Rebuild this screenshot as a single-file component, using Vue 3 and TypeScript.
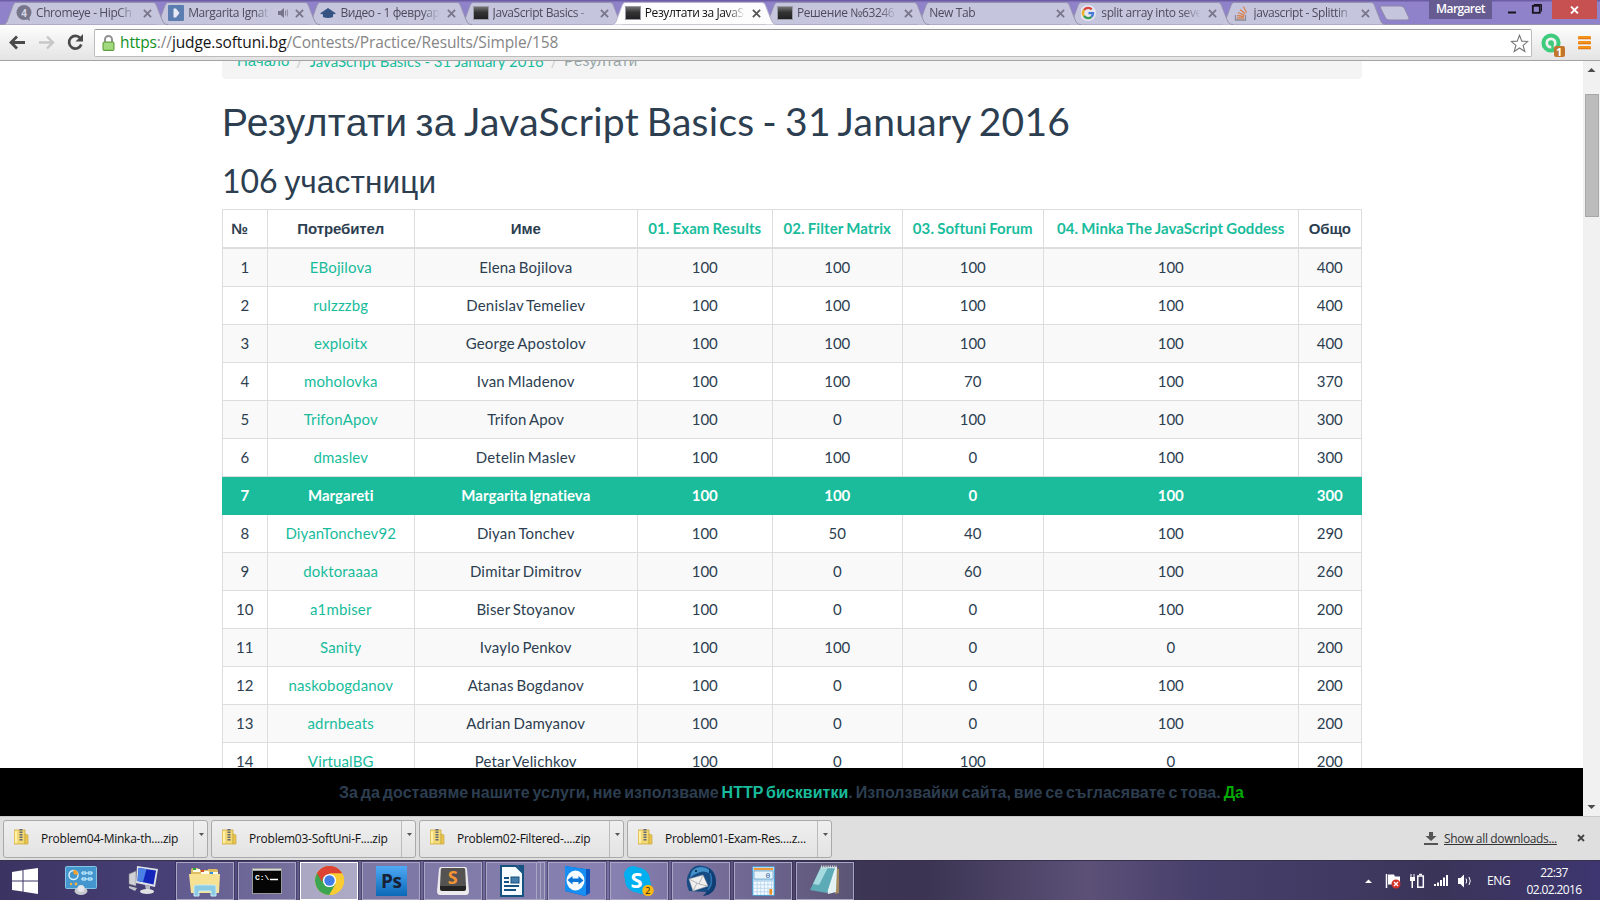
<script setup lang="ts">
type Tab = { title: string; icon: string; active?: boolean; sound?: boolean }
const tabs: Tab[] = [
  { title: 'Chromeye - HipCh', icon: 'hip' },
  { title: 'Margarita Ignat', icon: 'play', sound: true },
  { title: 'Видео - 1 февруар', icon: 'uni' },
  { title: 'JavaScript Basics -', icon: 'box' },
  { title: 'Резултати за JavaS', icon: 'box', active: true },
  { title: 'Решение №63246', icon: 'box' },
  { title: 'New Tab', icon: '' },
  { title: 'split array into seve', icon: 'google' },
  { title: 'javascript - Splittin', icon: 'so' },
]

const widths = [45, 147, 223, 135, 130, 141, 255, 63]
const heads = ['№', 'Потребител', 'Име', '01. Exam Results', '02. Filter Matrix', '03. Softuni Forum', '04. Minka The JavaScript Goddess', 'Общо']
const rows: (string | number)[][] = [
  [1, 'EBojilova', 'Elena Bojilova', 100, 100, 100, 100, 400],
  [2, 'rulzzzbg', 'Denislav Temeliev', 100, 100, 100, 100, 400],
  [3, 'exploitx', 'George Apostolov', 100, 100, 100, 100, 400],
  [4, 'moholovka', 'Ivan Mladenov', 100, 100, 70, 100, 370],
  [5, 'TrifonApov', 'Trifon Apov', 100, 0, 100, 100, 300],
  [6, 'dmaslev', 'Detelin Maslev', 100, 100, 0, 100, 300],
  [7, 'Margareti', 'Margarita Ignatieva', 100, 100, 0, 100, 300],
  [8, 'DiyanTonchev92', 'Diyan Tonchev', 100, 50, 40, 100, 290],
  [9, 'doktoraaaa', 'Dimitar Dimitrov', 100, 0, 60, 100, 260],
  [10, 'a1mbiser', 'Biser Stoyanov', 100, 0, 0, 100, 200],
  [11, 'Sanity', 'Ivaylo Penkov', 100, 100, 0, 0, 200],
  [12, 'naskobogdanov', 'Atanas Bogdanov', 100, 0, 0, 100, 200],
  [13, 'adrnbeats', 'Adrian Damyanov', 100, 0, 0, 100, 200],
  [14, 'VirtualBG', 'Petar Velichkov', 100, 0, 100, 0, 200],
]
const downloads = ['Problem04-Minka-th....zip', 'Problem03-SoftUni-F....zip', 'Problem02-Filtered-....zip', 'Problem01-Exam-Res....z...']
</script>

<template>
  <div class="screen">
    <header class="strip">
      <div class="tabs">
        <div v-for="(t, i) in tabs" :key="i" class="tab" :class="{ active: t.active }" :style="{ zIndex: t.active ? 20 : 10 - i }">
          <svg class="shape" width="168" height="25" viewBox="0 0 168 25">
            <path d="M0 24.5C3 24.5 4 22 5 19L10 5.500C11 3 12 2.500 14 2.500H149C151.500 2.500 152.500 3 153.500 5.500L159 19.500C160.500 23 161.500 24.500 165 24.500Z" :fill="t.active ? '#fdfdfd' : '#c5c6de'" />
            <path d="M0 24.5C3 24.5 4 22 5 19L10 5.500C11 3 12 2.500 14 2.500H149C151.500 2.500 152.500 3 153.500 5.500L159 19.500C160.500 23 161.500 24.500 165 24.500" fill="none" :stroke="t.active ? '#b9b4cc' : '#9692ae'" />
          </svg>
          <span v-if="t.icon" class="fav">
            <svg v-if="t.icon === 'hip'" width="16" height="16"><circle cx="8" cy="7.500" r="7.500" fill="#77758a" /><path d="M9 13l5 3-1-5z" fill="#77758a" /><text x="5.200" y="11.500" font-size="10" font-weight="700" fill="#d6d5e5" font-family="Open Sans">4</text></svg>
            <svg v-else-if="t.icon === 'play'" width="16" height="16"><rect width="16" height="16" rx="1" fill="#5c7db0" /><path d="M5.500 3.500h2.500l3.500 4.500-3.500 4.500H5.500z" fill="#e8ebf5" /></svg>
            <svg v-else-if="t.icon === 'uni'" width="16" height="16"><path d="M8 3l8 5.500-3 1v2.500q-5 2-10 0V9.500L0 8.500z" fill="#365482" /></svg>
            <svg v-else-if="t.icon === 'box'" width="16" height="16"><defs><linearGradient id="bx" x2="0" y2="1"><stop stop-color="#777" /><stop offset=".45" stop-color="#333" /><stop offset="1" stop-color="#202024" /></linearGradient></defs><rect x=".5" y="1.500" width="15" height="13" fill="url(#bx)" stroke="#9a9aa4" /></svg>
            <svg v-else-if="t.icon === 'google'" width="16" height="16"><circle cx="7" cy="8" r="8" fill="#e4e5ef" /><g fill="none" stroke-width="2.300"><path d="M3 5A5 5 0 0 1 10.700 4.400" stroke="#d8453b" /><path d="M3 11A5 5 0 0 1 3 5" stroke="#e8b020" /><path d="M10.500 11.800A5 5 0 0 1 3 11" stroke="#3a9d58" /><path d="M7.500 8.200h4.500q0 2-1.500 3.600" stroke="#4478d8" /></g></svg>
            <svg v-else width="16" height="16" fill="none"><path d="M1.500 10v5h10v-5" stroke="#8d8a93" stroke-width="1.300" /><path d="M3 13h7M3.200 10.500l6.800 1M4 7.500l6.500 2.600M6 4.500l5.300 4.300M9.300 1.500l3.300 6" stroke="#d98350" stroke-width="1.300" /></svg>
          </span>
          <span class="title" :class="{ sounded: t.sound }">{{ t.title }}</span>
          <svg v-if="t.sound" class="sound" width="10" height="10"><path d="M0 3h2.500L6 0v10L2.500 7H0z" fill="#77748a" /><path d="M7.500 2.500v5M9.300 1.500v7" stroke="#8b889d" /></svg>
          <svg class="x" width="9" height="9"><path d="M.9.900l7.200 7.200M8.100.900L.9 8.100" :stroke="t.active ? '#555' : '#777589'" stroke-width="1.800" /></svg>
        </div>
        <svg class="newtab" width="32" height="16"><path d="M2.500 1H22q2.500 0 3.500 2.500L30 13q.5 2-2 2H10q-2.500 0-3.500-2L1.500 3Q1 1 2.500 1z" fill="#c5c6de" stroke="#8b86aa" /></svg>
      </div>
      <span class="profile">Margaret</span>
      <svg class="winctl" width="60" height="19"><path d="M20 12.500h8" stroke="#19151f" stroke-width="2" /><g fill="none" stroke="#19151f"><rect x="44.800" y="5.800" width="7" height="7" stroke-width="1.800" /><path d="M46 4.500h7.500v7" /></g></svg>
      <span class="winclose"><svg width="9" height="8"><path d="M1 .5l7 7M8 .5l-7 7" stroke="#fff" stroke-width="1.800" /></svg></span>
    </header>

    <nav class="toolbar">
      <svg class="arrows" width="84" height="30" fill="none">
        <path d="M11 14.500H25M17 8.500l-6 6 6 6" stroke="#4a4a4a" stroke-width="2.800" />
        <path d="M39 14.500h14M47 8.500l6 6-6 6" stroke="#c7c7c7" stroke-width="2.400" />
        <path d="M80.500 10.500a6.300 6.300 0 1 0 .8 6" stroke="#4a4a4a" stroke-width="2.700" /><path d="M83 6v7.500h-7.500z" fill="#4a4a4a" />
      </svg>
      <div class="omni">
        <svg class="lock" width="13" height="16"><path d="M3 8V4.500a3.500 3.500 0 0 1 7 0V8" fill="none" stroke="#929292" stroke-width="2" /><rect x="1" y="7" width="11" height="8.500" rx="1" fill="#8fce66" stroke="#5d9c41" /><path d="M2 9h9M2 11h9M2 13h9" stroke="#b5e297" /></svg>
        <span class="url"><i class="green">https</i><i>://</i><b>judge.softuni.bg</b><i>/Contests/Practice/Results/Simple/158</i></span>
        <svg class="star" width="19" height="19"><path d="M9.500 1.200l2.300 5.900 6 .3-4.700 4 1.700 6.100-5.300-3.500-5.300 3.500 1.700-6.100-4.700-4 6-.3z" fill="#fff" stroke="#777" stroke-width="1.100" /></svg>
      </div>
      <svg class="ext" width="26" height="26"><circle cx="10" cy="11" r="7.600" fill="none" stroke="#3ecb7b" stroke-width="4" /><circle cx="10" cy="11" r="2.800" fill="#3ecb7b" /><path d="M11.500 11v8" stroke="#3ecb7b" stroke-width="2.500" /><rect x="13" y="14" width="11" height="11" rx="2" fill="#c2762d" /><text x="15" y="23.500" font-size="11" font-weight="700" fill="#fff" font-family="Open Sans">1</text></svg>
      <svg class="menu" width="14" height="14"><g fill="#f49118"><rect width="13" height="3" rx="1" /><rect y="5" width="13" height="3" rx="1" /><rect y="10" width="13" height="3" rx="1" /></g><path d="M0 2.800h13M0 7.800h13M0 12.800h13" stroke="#d8680b" stroke-width=".8" /></svg>
    </nav>

    <main class="viewport">
      <section class="page">
        <div class="doc">
          <div class="crumbs"><a class="cy">Начало</a><em>/</em><a>JavaScript Basics - 31 January 2016</a><em>/</em><span class="cy">Резултати</span></div>
          <h1><span class="cy">Резултати за </span>JavaScript Basics - 31 January 2016</h1>
          <h2>106 <span class="cy">участници</span></h2>
          <table>
            <colgroup><col v-for="(w, i) in widths" :key="i" :style="{ width: w + 'px' }" /></colgroup>
            <thead><tr><th v-for="(h, i) in heads" :key="i" :class="i > 2 && i < 7 ? 'link' : 'cy'">{{ h }}</th></tr></thead>
            <tbody>
              <tr v-for="r in rows" :key="r[0]" :class="{ me: r[0] === 7 }">
                <td v-for="(c, i) in r" :key="i" :class="{ link: i === 1, name: i === 2 }">{{ c }}</td>
              </tr>
            </tbody>
          </table>
        </div>
        <div class="cookie"><span class="cktext">За да доставяме нашите услуги, ние използваме <a>HTTP бисквитки</a>. Използвайки сайта, вие се съгласявате с това. <b>Да</b></span></div>
      </section>
      <aside class="scroll">
        <svg width="17" height="20"><path d="M4.500 11l4-4 4 4z" fill="#4c4c4c" /></svg>
        <div class="thumb"></div>
        <svg class="dn" width="17" height="20"><path d="M4.500 9l4 4 4-4z" fill="#4c4c4c" /></svg>
      </aside>
    </main>

    <section class="shelf">
      <div v-for="d in downloads" :key="d" class="dl">
        <svg class="zip" width="15" height="16"><rect x="0" y="1" width="11" height="14" fill="#f3d873" stroke="#d0ac3c" stroke-width=".8" /><path d="M11 5l3 1v9h-3z" fill="#e8c654" stroke="#c59f31" stroke-width=".6" /><path d="M7 0v12" stroke="#666a78" stroke-width="3" stroke-dasharray="1.500 1" /><path d="M2 2v12" stroke="#fff1ac" stroke-width="2" /></svg>
        <span class="fname">{{ d }}</span>
        <span class="drop"><svg width="5" height="3"><path d="M0 0h5L2.500 3z" fill="#555" /></svg></span>
      </div>
      <svg class="dlicon" width="14" height="14"><path d="M5 0h4v4h3.500L7 9 1.500 4H5zM0 11h14v2H0z" fill="#555" /></svg>
      <span class="all">Show all downloads...</span>
      <svg class="shx" width="8" height="8"><path d="M1 1l6 6M7 1L1 7" stroke="#444" stroke-width="1.800" /></svg>
    </section>

    <footer class="task">
      <span class="plain start"><svg width="26" height="26" fill="#fff"><path d="M0 4l10.500-1.700v10.200H0zM11.500 2.100L26 0v12.500H11.500zM0 13.500h10.500v10L0 22zM11.500 13.500H26V26l-14.500-2.200z" /></svg></span>
      <span class="plain cp"><svg width="32" height="30"><rect x=".5" y=".5" width="31" height="22" rx="1" fill="#4396ce" stroke="#86c4e5" /><circle cx="8.500" cy="9" r="4.500" fill="none" stroke="#d9f0ff" stroke-width="1.500" /><path d="M8.500 8V3.500A5 5 0 0 1 13 9z" fill="#f7a128" /><path d="M17 6h4v2h-4zM23 6h4v2h-4zM17 12h4v2h-4zM23 12h4v2h-4z" fill="#28a6ec" stroke="#e5f8ff" /><circle cx="6" cy="18" r="1.200" fill="#f7b13c" /><circle cx="11" cy="18" r="1.400" fill="#f7b13c" /><ellipse cx="16" cy="25" rx="6.500" ry="4" fill="#c7c9cf" /><circle cx="16" cy="22.500" r="3.500" fill="#e4e6ea" /></svg></span>
      <span class="plain pc"><svg width="31" height="29"><path d="M1 8l7-3v15l-7-2z" fill="#cfd3d8" stroke="#777" stroke-width=".5" /><path d="M9 0l21 3-3 18-19-4z" fill="#dde2e8" /><path d="M10.500 2l17.500 2.500-2.500 14-16-3.500z" fill="#1425ba" /><path d="M10.500 2l8 1-3.500 13-5.500-1z" fill="#4b80e6" /><path d="M17 19l5 1v5l-4-1z" fill="#b8bdc3" /><ellipse cx="19" cy="25.500" rx="7" ry="2.500" fill="#dfe3e6" /><path d="M1 20l8 2-2 3-6-3z" fill="#bfc4ca" /></svg></span>
      <span class="btn b0"><svg width="34" height="32"><path d="M3 5q0-2 2-2h5l1 2h9V4h8q2 0 2 2v18H3z" fill="#dfbd62" /><path d="M5 4h7v3H5zM13 6h8v3h-8zM22 7h8v3h-8z" fill="#fffbe9" /><path d="M5 3h3v2H5z" fill="#28a63a" /><path d="M13 5h3v2h-3z" fill="#d34a2a" /><path d="M22 7h3v2h-3z" fill="#318edc" /><path d="M1 9h31l-1 19H3z" fill="#f7e193" /><path d="M6 31v-9q0-2 2-2h18q2 0 2 2v9h-5v-5H11v5z" fill="#8ccbe4" stroke="#c9edf7" /></svg></span>
      <span class="btn b1"><svg width="30" height="26"><rect width="30" height="26" fill="#999" /><rect x="1" y="3" width="28" height="22" fill="#050505" /><path d="M1 1.500h28" stroke="#ddd" /><text x="3" y="12" font-size="8" font-weight="700" fill="#fff" font-family="Liberation Mono">C:\</text><path d="M18 11.500h8" stroke="#fff" stroke-width="1.500" /></svg></span>
      <span class="btn on b2"><svg width="31" height="31" viewBox="0 0 31 31"><circle cx="15.500" cy="15.500" r="14.500" fill="#f8cc32" /><path d="M15.500 15.500L3 8.200A14.500 14.500 0 0 1 28.100 8.200H15.500z" fill="#dc4332" /><path d="M15.500 15.500l6 3.500-6.200 11A14.500 14.500 0 0 1 3 8.200z" fill="#3ca552" /><path d="M15.500 15.500V8.200h12.600A14.500 14.500 0 0 1 15.300 30l6.500-11z" fill="#f8cc32" /><path d="M3 8.200A14.500 14.500 0 0 1 28.100 8.200H15.500a7 7 0 0 0-6.500 4.500L8 17z" fill="#dc4332" /><circle cx="15.500" cy="15.500" r="6.600" fill="#fff" /><circle cx="15.500" cy="15.500" r="5.200" fill="#417ee8" /></svg></span>
      <span class="btn b3"><svg width="31" height="30"><defs><linearGradient id="ps" x2="0" y2="1"><stop stop-color="#4fa9f5" /><stop offset="1" stop-color="#0a69b7" /></linearGradient></defs><rect width="31" height="30" fill="url(#ps)" /><text x="5" y="22" textLength="21" font-size="19" font-weight="700" fill="#162337" font-family="Open Sans">Ps</text></svg></span>
      <span class="btn b4"><svg width="32" height="28"><path d="M2 2q.3-2 2-2h24q1.700 0 2 2l2 22q0 4-3 4H3q-3 0-3-4z" fill="#eceaec" /><path d="M5 1h22q1 0 1.200 1.500L29 19H3l.8-16.500Q4 1 5 1z" fill="#555352" /><path d="M3 19h26v3q0 2-2 2H5q-2 0-2-2z" fill="#242323" /><text x="10.800" y="16.500" font-size="18" font-weight="700" fill="#f59435" font-family="Open Sans">S</text></svg></span>
      <span class="btn b5"><svg width="26" height="32"><path d="M2 1h15l7 7v23H2z" fill="#f5fbff" stroke="#15527f" stroke-width="2" /><path d="M18 0h7v8z" fill="#15527f" /><path d="M5 13h5M5 17h5M5 21h15M5 25h12" stroke="#15527f" stroke-width="2" /><rect x="12" y="12" width="8" height="6" fill="#447cab" stroke="#15527f" /></svg></span>
      <span class="stack"></span><span class="stack s2"></span>
      <span class="btn b6"><svg width="27" height="31"><path d="M1 1l20 3 5 0v24l-5 3-20-5z" fill="#0e55c4" /><path d="M1 1l21 3v27L1 26z" fill="#178ff2" /><ellipse cx="11.500" cy="15.500" rx="9" ry="10" fill="#f5fbff" /><path d="M3.500 15l5-4v2.500h6V11l5 4.500-5 4V17h-6v2.500z" fill="#0875d7" /></svg></span>
      <span class="btn b7"><svg width="32" height="32"><circle cx="10" cy="10" r="9" fill="#00aff0" /><circle cx="19" cy="20" r="9" fill="#00aff0" /><circle cx="14.500" cy="15" r="12.500" fill="#00aff0" /><text x="7.500" y="23" font-size="22" font-weight="700" fill="#fff" font-family="Open Sans">S</text><circle cx="25" cy="25.500" r="5.700" fill="#fbb813" /><text x="22.300" y="29" font-size="9" fill="#222" font-family="Open Sans">2</text></svg></span>
      <span class="btn b8"><svg width="32" height="32"><path d="M5 6Q10-1 18 1q13 2 13 16-1 12-13 14 3-2 3-4L4 26Q-1 15 5 6z" fill="#164b83" /><path d="M5 13Q6 2 16 2q11 1 13 11-6-8-14-6-6 2-10 6z" fill="#4490c8" /><path d="M24 9q8 10-6 22 13-2 13-14-1-9-7-13z" fill="#0f3d74" /><path d="M25 8q4 9-2 17" fill="none" stroke="#2d78b5" stroke-width="1.500" /><path d="M4 14l14-4 5 11-15 5z" fill="#f1f0ee" stroke="#a2a4aa" stroke-width=".5" /><path d="M4 14l10 5 4-9M8 26l4-8M14 19l9 2" fill="none" stroke="#a2a4aa" stroke-width=".8" /><circle cx="11" cy="6" r="1" fill="#081c33" /></svg></span>
      <span class="btn b9"><svg width="23" height="30"><rect x=".5" y=".5" width="22" height="29" rx="1" fill="#b8d8ef" stroke="#4e99cb" /><path d="M2 2h19v2H2z" fill="#ed9b3a" /><path d="M2 5h19v8H2z" fill="#e6f3fb" stroke="#619dc8" stroke-width=".7" /><text x="13.500" y="12" font-size="8" fill="#29669a" font-family="Liberation Mono">0</text><path d="M2 17h19M2 20.500h19M2 24h19M2 27.500h19" stroke="#f7fbff" stroke-width="2.400" stroke-dasharray="2.700 .9" /><path d="M17.400 23h2.700v5.600h-2.700z" fill="#ed8e20" /></svg></span>
      <span class="btn b10"><svg width="32" height="31"><path d="M27 3l3 1v24l-4 1z" fill="#a58a5d" /><path d="M12 2h16l-1 25-8 2z" fill="#e4f2f3" /><path d="M12 2l14 1-8 25-17-3z" fill="#5eabb8" /><path d="M12 2l7 .5L10 20l-6-1z" fill="#a5dade" /><path d="M12 2h16" stroke="#d5dadd" stroke-width="3" stroke-dasharray="1.200 1" /></svg></span>
      <svg class="tray" width="110" height="20">
        <path d="M0 12l3.500-3.500L7 12z" fill="#fff" />
        <path d="M21.500 3v14" stroke="#fff" stroke-width="1.500" /><path d="M23 3.500h6l1 2h5v8H23z" fill="#fff" /><circle cx="31" cy="13" r="4.500" fill="#d5312b" /><path d="M29 11l4 4M33 11l-4 4" stroke="#fff" stroke-width="1.300" />
        <path d="M45.500 3h1v3h2V3h1v3h.5v4h-2v7h-1.500v-7H45V6h.5z" fill="#fff" /><rect x="52.800" y="5" width="5.500" height="11.200" fill="none" stroke="#fff" stroke-width="1.500" /><path d="M54 3.500h3" stroke="#fff" stroke-width="1.500" />
        <path d="M69 13h2v2h-2zM72 11.500h2V15h-2zM75 9h2v6h-2zM78 6.500h2V15h-2zM81 4h2v11h-2z" fill="#fff" />
        <path d="M93 7h2.500L99 3.500v13L95.500 13H93z" fill="#fff" /><path d="M101 7.500q1.500 2.500 0 5M104 6q2.500 4 0 8" fill="none" stroke="#fff" stroke-width="1" />
      </svg>
      <span class="lang">ENG</span>
      <span class="clock"><span>22:37</span><span>02.02.2016</span></span>
    </footer>
  </div>
</template>

<style>
html, body { margin: 0; overflow: hidden; }
</style>

<style scoped>
* { box-sizing: border-box; }
svg { display: block; flex: none; }
.screen { width: 1600px; height: 900px; overflow: hidden; display: flex; flex-direction: column; font-family: "Open Sans", "Noto Sans", sans-serif; background: #fff; }
.strip { height: 25px; flex: none; display: flex; background: linear-gradient(#6c5da4 0, #6c5da4 1px, #8f82ca 2px, #8f82ca 24px, #9692ae 24px); position: relative; }
.tabs { display: flex; width: 1429px; flex: none; padding-left: 3px; }
.tab { position: relative; width: 152.200px; height: 25px; flex: none; display: flex; align-items: center; padding-left: 13px; }
.shape { position: absolute; left: 0; top: 0; }
.fav { position: relative; width: 20px; height: 16px; margin-top: 1px; flex: none; }
.title { position: relative; width: 100px; font-size: 12px; line-height: 18px; letter-spacing: -.4px; color: #4d4b5c; white-space: nowrap; overflow: hidden; -webkit-mask-image: linear-gradient(90deg, #000 82%, transparent); mask-image: linear-gradient(90deg, #000 82%, transparent); }
.title.sounded { width: 82px; }
.active .title { color: #111; }
.sound { position: relative; margin-left: 8px; }
.x { position: absolute; left: 140px; top: 9px; }
.newtab { margin: 5px 0 0 6px; }
.profile { width: 63px; height: 19px; background: #675c91; color: #fff; font-size: 12px; line-height: 18px; letter-spacing: -.6px; font-weight: 600; text-align: center; }
.winctl { margin-left: -4px; margin-right: 4px; }
.winclose { width: 45px; height: 19px; background: #c75050; display: flex; align-items: center; justify-content: center; }
.toolbar { height: 36px; flex: none; display: flex; background: linear-gradient(#fdfdfd, #e4e4e4); border-bottom: 1px solid #a5a3a5; }
.arrows { margin-top: 3px; }
.omni { margin: 4px 0 0 10px; width: 1438px; height: 28px; border: 1px solid #bcbcbc; border-top-color: #999; border-radius: 2px; background: #fff; display: flex; align-items: center; padding-left: 7px; flex: none; }
.url { font-size: 15.500px; letter-spacing: -.12px; margin: -2px 0 0 5px; line-height: 24px; color: #858585; flex: 1; }
.url i { font-style: normal; }
.url b { font-weight: 400; color: #151515; }
.url .green { color: #12921e; }
.star { margin-right: 2px; }
.ext { margin: 7px 0 0 9px; }
.menu { margin: 11px 0 0 11px; }
.viewport { height: 755px; flex: none; display: flex; }
.page { width: 1583px; height: 755px; display: flex; flex-direction: column; font-family: Lato, "Liberation Sans", sans-serif; color: #2c3e50; }
.cy { font-family: "Liberation Sans", Arial, sans-serif; }
.doc { height: 707px; flex: none; overflow: hidden; padding-left: 222px; }
.crumbs { width: 1140px; height: 18px; background: #f4f4f4; border-radius: 0 0 4px 4px; font-size: 15px; line-height: 20px; display: flex; padding-left: 15px; align-items: flex-end; overflow: hidden; white-space: nowrap; color: #95a5a6; }
.crumbs > * { height: 28px; line-height: 20px; }
.crumbs a { color: #18bc9c; }
.crumbs em { font-style: normal; width: 20.500px; text-align: center; color: #ccc; }
.crumbs span.cy { letter-spacing: .35px; }
h1, h2 { margin: 0; font-weight: 400; white-space: nowrap; }
h1 { font-size: 39px; line-height: 43px; margin-top: 21px; height: 43px; letter-spacing: .26px; word-spacing: -2.300px; }
h2 { font-size: 32px; line-height: 35px; margin-top: 20px; height: 35px; word-spacing: -1.500px; }
h1 .cy { font-size: 39px; letter-spacing: .38px; word-spacing: -3px; }
h2 .cy { font-size: 31.500px; letter-spacing: .15px; }
table { margin-top: 11px; table-layout: fixed; width: 1140px; border-collapse: separate; border-spacing: 0; border-left: 1px solid #ddd; border-top: 1px solid #ddd; font-size: 15px; line-height: 21px; text-align: center; }
th, td { padding: 0 .5px 0 0; border-right: 1px solid #ddd; border-bottom: 1px solid #ddd; height: 38px; white-space: nowrap; }
th { height: 39px; border-bottom-width: 2px; font-weight: 700; }
th.cy { letter-spacing: -.1px; }
th.link { word-spacing: -.6px; letter-spacing: .08px; }
th:first-child { padding-right: 11px; }
.link { color: #18bc9c; }
td.link { letter-spacing: .14px; }
td.name { letter-spacing: .18px; word-spacing: -1.200px; }
.me td.name, .me td.link { letter-spacing: .04px; }
tbody tr:nth-child(odd) { background: #f9f9f9; }
tbody tr.me { background: #1abc9c; color: #fff; font-weight: 700; }
.me td { border-color: #1abc9c; }
.me .link { color: #fff; }
.me td:first-child { box-shadow: -1px 0 #1abc9c; }
.cookie { height: 48px; background: #000; display: flex; align-items: center; justify-content: center; padding-top: 1px; font: 700 16px/22px "Liberation Sans", sans-serif; letter-spacing: .03px; word-spacing: -1.600px; color: #2c3e50; white-space: nowrap; }
.cookie a { color: #18bc9c; }
.cookie b { color: #0a0; }
.scroll { width: 17px; background: #f1f1f1; display: flex; flex-direction: column; }
.thumb { margin: 13px 1px 0 2px; height: 123px; background: #bcbcbc; border: 1px solid #a8a8a8; }
.dn { margin-top: auto; }
.shelf { height: 44px; flex: none; background: #dfdfdf; border-top: 1px solid #c9c9c9; display: flex; align-items: flex-start; padding: 3px 0 0 3px; }
.dl { width: 205px; height: 38px; margin-right: 3px; flex: none; border: 1px solid #a9a9a9; border-radius: 3px; background: linear-gradient(#efefef, #e3e3e3); display: flex; align-items: center; font-size: 12px; color: #111; }
.zip { margin: -4px 12px 0 10px; }
.fname { width: 153px; margin-top: -1px; letter-spacing: -.25px; white-space: nowrap; }
.drop { width: 14px; height: 36px; border-left: 1px solid #bbb; padding: 12px 0 0 5px; }
.dlicon { margin: 12px 6px 0 589px; }
.all { font-size: 12px; line-height: 18px; margin-top: 10px; width: 113px; white-space: nowrap; letter-spacing: -.34px; text-decoration: underline; color: #333; }
.shx { margin: 14px 0 0 20px; }
.task { height: 40px; flex: none; display: flex; align-items: center; background: linear-gradient(90deg, #3b3361, #49427a 12%, #66608e 20%, #7770a4 38%, #5c5280 46%, #3c3654 54%, #3b3553 58%, #5c5077 68%, #47406c 75%, #3b3459 90%, #3d3670); border-top: 1px solid #36304e; }
.plain { display: flex; align-items: center; flex: none; }
.start { width: 65px; padding-left: 12px; }
.cp { width: 63px; }
.pc { width: 48px; }
.btn { width: 58px; height: 38px; margin-right: 4px; flex: none; border: 1px solid #a9a5c4; background: rgba(205, 202, 235, .2); display: flex; align-items: center; justify-content: center; outline: 1px solid rgba(35, 27, 60, .4); }
.on { background: rgba(230, 229, 240, .55); border-color: #fff; }
.b5 { width: 51px; margin-right: 0; }
.stack { width: 4px; height: 38px; border: 1px solid #a9a5c4; border-left: 0; background: #827da8; flex: none; }
.s2 { margin-right: 3px; }
.tray { margin-left: 507px; }
.lang { color: #fff; font-size: 12px; letter-spacing: -.3px; margin-left: 12px; width: 24px; }
.clock { color: #fff; font-size: 12px; line-height: 17px; letter-spacing: -.6px; display: flex; flex-direction: column; align-items: center; margin-left: 13px; width: 60px; white-space: nowrap; }
</style>
